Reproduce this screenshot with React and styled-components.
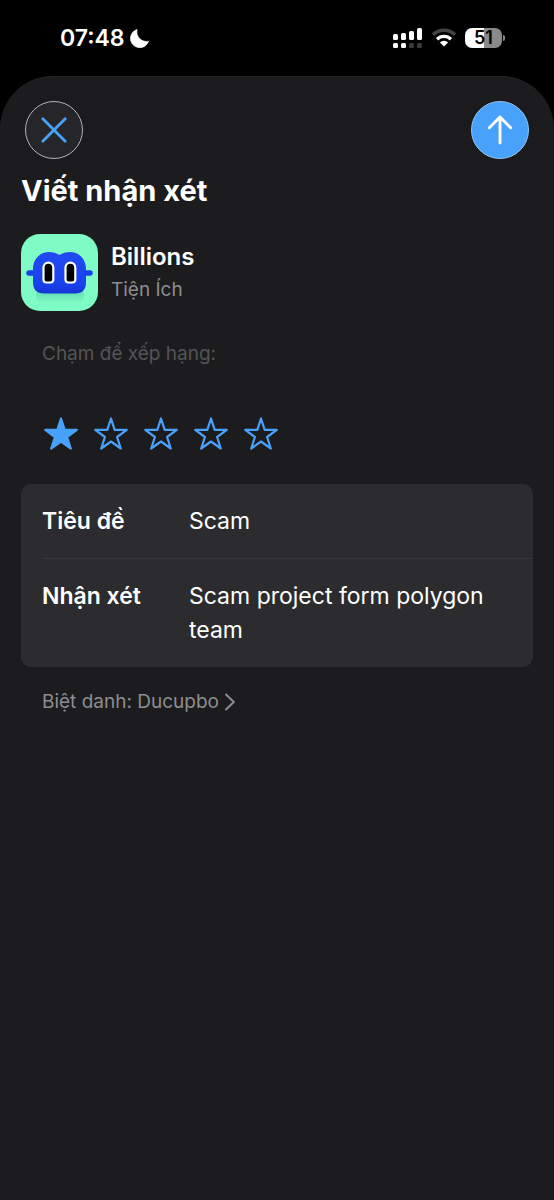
import { useState } from "react"
import styled, { createGlobalStyle } from "styled-components"

const GlobalStyle = createGlobalStyle`
    * {
        box-sizing: border-box;
    }

    body {
        margin: 0;
        background: #000;
        color: #fff;
        font-family: Inter, "Noto Sans", sans-serif;
        font-size: 23px;
    }

    button, input, textarea {
        font: inherit;
        color: inherit;
    }
`;

const Screen = styled.div`
    display: flex;
    flex-direction: column;
    min-height: 100vh;
`;

const StatusBar = styled.header`
    display: flex;
    align-items: center;
    justify-content: space-between;
    height: 76px;
    padding: 0 49px 0 60px;
`;

const StatusGroup = styled.div`
    display: flex;
    align-items: center;
    gap: ${({ $gap }) => $gap}px;
`;

const Clock = styled.time`
    font-weight: 600;
    line-height: 28px;
`;

const Battery = styled.div`
    display: flex;
    align-items: center;
    gap: 1px;

    &::after {
        content: "";
        width: 2px;
        height: 6px;
        border-radius: 0 2px 2px 0;
        background: #8a8a8a;
    }
`;

const BatteryLevel = styled.div`
    width: 37px;
    height: 20px;
    border-radius: 7px;
    background: linear-gradient(90deg, #fff 51%, #8a8a8a 51%);
    color: #000;
    font-size: 18px;
    font-weight: 600;
    line-height: 20px;
    text-align: center;
`;

const Sheet = styled.main`
    flex: 1;
    padding: 24px 21px;
    border-top: 1px solid #242426;
    border-radius: 53px 53px 0 0;
    background: #1c1c1e;
`;

const Toolbar = styled.div`
    display: flex;
    justify-content: space-between;
    padding: 0 4px;
`;

const RoundButton = styled.button`
    display: flex;
    align-items: center;
    justify-content: center;
    width: 58px;
    height: 58px;
    padding: 0;
    border: 1px solid ${({ $primary }) => $primary ? '#8fc4f5' : '#b4b4b6'};
    border-radius: 50%;
    background: ${({ $primary }) => $primary ? '#48a2fc' : '#262628'};
    color: ${({ $primary }) => $primary ? '#fff' : '#48a2fc'};
    box-shadow: 0 0 24px rgba(0, 0, 0, 0.06);
`;

const Title = styled.h1`
    margin: 13px 0 24px;
    font-size: 29px;
    font-weight: 700;
    line-height: 38px;
`;

const AppSummary = styled.section`
    display: flex;
    align-items: center;
    gap: 13px;
`;

const AppName = styled.h2`
    margin: 0;
    font-size: 24px;
    font-weight: 600;
    line-height: 34px;
`;

const AppCategory = styled.p`
    margin: 0;
    color: #8d8d92;
    font-size: 19px;
    line-height: 32px;
`;

const Rating = styled.fieldset`
    margin: 0;
    padding: 30px 21px;
    border: 0;
`;

const RatingHint = styled.legend`
    float: left;
    padding: 0;
    color: #545456;
    font-size: 19px;
    line-height: 26px;
`;

const Stars = styled.div`
    display: flex;
    clear: both;
    gap: 12px;
    padding-top: 47px;
`;

const StarLabel = styled.label`
    display: flex;
    width: 38px;
    height: 40px;
    align-items: center;
    justify-content: center;
    cursor: pointer;
`;

const StarInput = styled.input`
    position: absolute;
    opacity: 0;
    pointer-events: none;
`;

const Card = styled.div`
    padding-left: 21px;
    border-radius: 10px;
    background: #2c2c2e;
`;

const Field = styled.div`
    display: grid;
    grid-template-columns: 147px 1fr;
    padding: 20px 20px 20px 0;

    & + & {
        border-top: 1px solid #38383a;
    }
`;

const FieldLabel = styled.label`
    font-weight: 600;
    line-height: 34px;
`;

const TextInput = styled.input`
    width: 100%;
    height: 34px;
    padding: 0;
    border: 0;
    outline: 0;
    background: none;
`;

const TextArea = styled.textarea`
    display: block;
    width: 100%;
    padding: 0;
    border: 0;
    outline: 0;
    resize: none;
    overflow: hidden;
    background: none;
    line-height: 34px;
`;

const NicknameButton = styled.button`
    display: flex;
    align-items: center;
    gap: 5px;
    margin: 21px;
    padding: 0;
    border: 0;
    background: none;
    color: #8d8d92;
    font-size: 19px;
    line-height: 28px;
`;

const MoonIcon = () => (
    <svg width="19" height="19" viewBox="0 0 19 19">
        <path d="M7.200 .4A9.300 9.300 0 1 0 18.600 12.200 9.600 9.600 0 0 1 7.200 .4Z" fill="#fff" stroke="#fff" strokeWidth="0.600" strokeLinejoin="round" />
    </svg>
)

const SignalIcon = () => (
    <svg width="30" height="21" viewBox="0 0 30 21">
        <g fill="#fff">
            <rect x="0" y="6" width="5" height="6" rx="1.500" />
            <rect x="8" y="5" width="5" height="7" rx="1.500" />
            <rect x="16" y="3" width="5" height="9" rx="1.500" />
            <rect x="24" y="0" width="5" height="12" rx="1.500" />
            <rect x="0" y="15" width="5" height="5" rx="1.500" />
            <rect x="8" y="15" width="5" height="5" rx="1.500" />
        </g>
        <g fill="#3a3a3a">
            <rect x="16" y="15" width="5" height="5" rx="1.500" />
            <rect x="24" y="15" width="5" height="5" rx="1.500" />
        </g>
    </svg>
)

const WifiIcon = () => (
    <svg width="26" height="20" viewBox="0 0 26 20" fill="none" strokeWidth="3.400">
        <path d="M2 6.800a15.600 15.600 0 0 1 22 0" stroke="#444" />
        <path d="M6 11.200a10 10 0 0 1 14 0" stroke="#fff" />
        <path d="M13 18.600 8.900 14.500a5.800 5.800 0 0 1 8.200 0Z" fill="#fff" />
    </svg>
)

const CloseIcon = () => (
    <svg width="26" height="26" viewBox="0 0 26 26" fill="none" stroke="currentColor" strokeWidth="2.800" strokeLinecap="round">
        <path d="M1.800 1.800l22.400 22.400M24.200 1.800L1.800 24.200" />
    </svg>
)

const SubmitIcon = () => (
    <svg width="26" height="30" viewBox="0 0 26 30" fill="none" stroke="currentColor" strokeWidth="2.900" strokeLinecap="round" strokeLinejoin="round">
        <path d="M13 28V2M2.300 12.700L13 2l10.700 10.700" />
    </svg>
)

const StarIcon = ({ filled }) => (
    <svg width="36" height="36" viewBox="0 0 36 36" fill={filled ? 'currentColor' : 'none'} stroke="#48a2fc" color="#48a2fc" strokeWidth="2.200" strokeLinejoin="round">
        <path d="M18 2.500l3.700 11.300h12.100l-9.700 7.200 3.700 11.500L18 25.500l-9.800 7 3.700-11.500-9.700-7.200h12.100Z" />
    </svg>
)

const ChevronIcon = () => (
    <svg width="12" height="18" viewBox="0 0 12 18" fill="none" stroke="currentColor" strokeWidth="2" strokeLinecap="round" strokeLinejoin="round">
        <path d="M2 1.500L9.800 9 2 16.500" />
    </svg>
)

const BillionsLogo = () => (
    <svg width="77" height="77" viewBox="0 0 77 77">
        <defs>
            <linearGradient id="face" x2="0" y2="1">
                <stop stopColor="#214bf0" />
                <stop offset="0.750" stopColor="#1a41ef" />
                <stop offset="1" stopColor="#1636d6" />
            </linearGradient>
            <linearGradient id="shade" x2="0" y2="1">
                <stop offset="0.300" stopColor="#66dfb4" />
                <stop offset="1" stopColor="#7ffbc6" />
            </linearGradient>
        </defs>
        <rect width="77" height="77" rx="19" fill="#7ffbc6" />
        <rect x="15" y="54" width="48" height="15" rx="7" fill="url(#shade)" />
        <path d="M8 39h61" stroke="#1a3fe8" strokeWidth="5.500" strokeLinecap="round" />
        <path d="M12 35C12 25 19 18 28 18q6 0 10.500 3Q43 18 49 18C58 18 65 25 65 35V48Q65 59.500 54 59.500H23Q12 59.500 12 48Z" fill="url(#face)" />
        <g fill="#000" stroke="#fff" strokeWidth="2.200">
            <path d="M22.500 33.500a4.900 4.900 0 0 1 9.800 0v12q0 3-3 3h-3.800q-3 0-3-3Z" />
            <path d="M44.500 33.500a4.900 4.900 0 0 1 9.800 0v12q0 3-3 3h-3.800q-3 0-3-3Z" />
        </g>
    </svg>
)

const StarRating = ({ value, onChange }) => (
    <Rating>
        <RatingHint>Chạm để xếp hạng:</RatingHint>
        <Stars>
            {[1, 2, 3, 4, 5].map(star => (
                <StarLabel key={star}>
                    <StarInput
                        type="radio"
                        name="rating"
                        aria-label={`${star} sao`}
                        checked={value === star}
                        onChange={() => onChange(star)}
                    />
                    <StarIcon filled={star <= value} />
                </StarLabel>
            ))}
        </Stars>
    </Rating>
)

export default function App() {
    const [rating, setRating] = useState(1)
    const [title, setTitle] = useState('Scam')
    const [review, setReview] = useState('Scam project form polygon team')

    return (
        <>
        <GlobalStyle />
        <Screen>
            <StatusBar>
                <StatusGroup $gap={5}>
                    <Clock>07:48</Clock>
                    <MoonIcon />
                </StatusGroup>
                <StatusGroup $gap={8}>
                    <SignalIcon />
                    <WifiIcon />
                    <Battery>
                        <BatteryLevel>51</BatteryLevel>
                    </Battery>
                </StatusGroup>
            </StatusBar>
            <Sheet>
                <Toolbar>
                    <RoundButton type="button" aria-label="Đóng"><CloseIcon /></RoundButton>
                    <RoundButton type="button" aria-label="Gửi" $primary><SubmitIcon /></RoundButton>
                </Toolbar>
                <Title>Viết nhận xét</Title>
                <AppSummary>
                    <BillionsLogo />
                    <div>
                        <AppName>Billions</AppName>
                        <AppCategory>Tiện Ích</AppCategory>
                    </div>
                </AppSummary>
                <StarRating value={rating} onChange={setRating} />
                <Card>
                    <Field>
                        <FieldLabel htmlFor="title">Tiêu đề</FieldLabel>
                        <TextInput id="title" value={title} onChange={e => setTitle(e.target.value)} />
                    </Field>
                    <Field>
                        <FieldLabel htmlFor="review">Nhận xét</FieldLabel>
                        <TextArea id="review" rows={2} value={review} onChange={e => setReview(e.target.value)} />
                    </Field>
                </Card>
                <NicknameButton type="button">
                    Biệt danh: Ducupbo
                    <ChevronIcon />
                </NicknameButton>
            </Sheet>
        </Screen>
        </>
    )
}
